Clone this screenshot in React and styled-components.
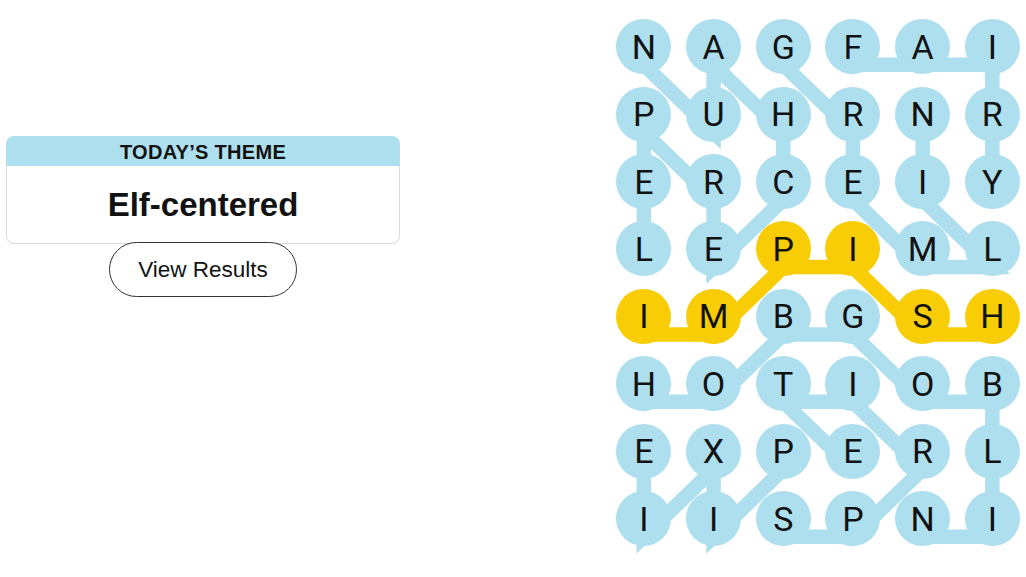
import React from "react";
import styled, { createGlobalStyle } from "styled-components";

const BLUE = "#aedfee";
const YELLOW = "#f8cd05";
const COL_W = 69.7;
const ROW_H = 67.43;
const LINE_DROP = 18;

const GRID = [
  "NAGFAI",
  "PUHRNR",
  "ERCEIY",
  "LEPIML",
  "IMBGSH",
  "HOTIOB",
  "EXPERL",
  "IISPNI",
];

// found words as [row, col] paths
const WORDS = [
  { name: "LEPRECHAUN", cells: [[3, 0], [2, 0], [1, 0], [2, 1], [3, 1], [2, 2], [1, 2], [0, 1], [1, 1], [0, 0]] },
  { name: "GREMLIN", cells: [[0, 2], [1, 3], [2, 3], [3, 4], [3, 5], [2, 4], [1, 4]] },
  { name: "FAIRY", cells: [[0, 3], [0, 4], [0, 5], [1, 5], [2, 5]] },
  { name: "HOBGOBLIN", cells: [[5, 0], [5, 1], [4, 2], [4, 3], [5, 4], [5, 5], [6, 5], [7, 5], [7, 4]] },
  { name: "SPRITE", cells: [[7, 2], [7, 3], [6, 4], [5, 3], [5, 2], [6, 3]] },
  { name: "PIXIE", cells: [[6, 2], [7, 1], [6, 1], [7, 0], [6, 0]] },
  { name: "IMPISH", spangram: true, cells: [[4, 0], [4, 1], [3, 2], [3, 3], [4, 4], [4, 5]] },
];

const spangramCells = new Set(
  WORDS.filter((w) => w.spangram).flatMap((w) => w.cells.map(([r, c]) => `${r}-${c}`))
);

const GlobalStyle = createGlobalStyle`
  html, body {
    margin: 0;
    padding: 0;
    background: #ffffff;
    overflow: hidden;
  }
  body {
    font-family: "Liberation Sans", Arial, sans-serif;
    color: #121212;
  }
`;

function App() {
  return (
    <>
      <GlobalStyle />
      <Page>
        <Sidebar>
          <ThemeCard>
            <ThemeHeader>Today’s Theme</ThemeHeader>
            <ThemeBody>Elf-centered</ThemeBody>
          </ThemeCard>
          <ResultsButton>View Results</ResultsButton>
        </Sidebar>
        <Board>
          <Lines width={COL_W * 6} height={ROW_H * 8}>
            {WORDS.map((w) => (
              <polyline
                key={w.name}
                points={w.cells
                  .map(([r, c]) => `${COL_W * (c + 0.5)},${ROW_H * (r + 0.5) + LINE_DROP}`)
                  .join(" ")}
                fill="none"
                stroke={w.spangram ? YELLOW : BLUE}
                strokeWidth="14.5"
                strokeLinejoin="miter"
                strokeMiterlimit="4"
              />
            ))}
          </Lines>
          <LetterGrid>
            {GRID.map((row, r) =>
              row.split("").map((ch, c) => (
                <Cell key={`${r}-${c}`}>
                  <Tile $spangram={spangramCells.has(`${r}-${c}`)}>{ch}</Tile>
                </Cell>
              ))
            )}
          </LetterGrid>
        </Board>
      </Page>
    </>
  );
}

export default App;

const Page = styled.div`
  display: flex;
  align-items: flex-start;
  padding-left: 6px;
  width: 1026px;
  height: 577px;
  box-sizing: border-box;
`;

const Sidebar = styled.div`
  width: 394px;
  flex-shrink: 0;
  padding-top: 136px;
  display: flex;
  flex-direction: column;
  align-items: center;
`;

const ThemeCard = styled.div`
  width: 100%;
  display: flex;
  flex-direction: column;
`;

const ThemeHeader = styled.div`
  height: 30px;
  background: ${BLUE};
  border-radius: 8px 8px 0 0;
  text-align: center;
  text-transform: uppercase;
  font-weight: 700;
  font-size: 20px;
  line-height: 33px;
  letter-spacing: 0.3px;
`;

const ThemeBody = styled.div`
  height: 78px;
  border: 1px solid #dcdcdc;
  border-top: none;
  border-radius: 0 0 8px 8px;
  display: flex;
  align-items: center;
  justify-content: center;
  font-weight: 700;
  font-size: 33px;
  padding-top: 1px;
  box-sizing: border-box;
`;

const ResultsButton = styled.button`
  position: relative;
  margin-top: -2px;
  width: 188px;
  height: 55px;
  border: 1px solid #333;
  border-radius: 28px;
  background: #fff;
  font-family: "Liberation Sans", Arial, sans-serif;
  font-size: 22.5px;
  color: #121212;
  padding-top: 2px;
  cursor: pointer;
`;

const Board = styled.div`
  position: relative;
  flex-shrink: 0;
  margin-left: 209px;
  margin-top: 13px;
  width: ${COL_W * 6}px;
  height: ${ROW_H * 8}px;
`;

const Lines = styled.svg`
  position: absolute;
  left: 0;
  top: 0;
  overflow: visible;
`;

const LetterGrid = styled.div`
  position: relative;
  display: grid;
  grid-template-columns: repeat(6, ${COL_W}px);
  grid-template-rows: repeat(8, ${ROW_H}px);
`;

const Cell = styled.div`
  display: flex;
  align-items: center;
  justify-content: center;
`;

const Tile = styled.div`
  width: 55px;
  height: 55px;
  border-radius: 50%;
  background: ${(p) => (p.$spangram ? YELLOW : BLUE)};
  display: flex;
  align-items: center;
  justify-content: center;
  font-family: Roboto, "Liberation Sans", sans-serif;
  font-size: 34px;
  font-weight: 400;
  color: #121212;
  line-height: 1;
`;
